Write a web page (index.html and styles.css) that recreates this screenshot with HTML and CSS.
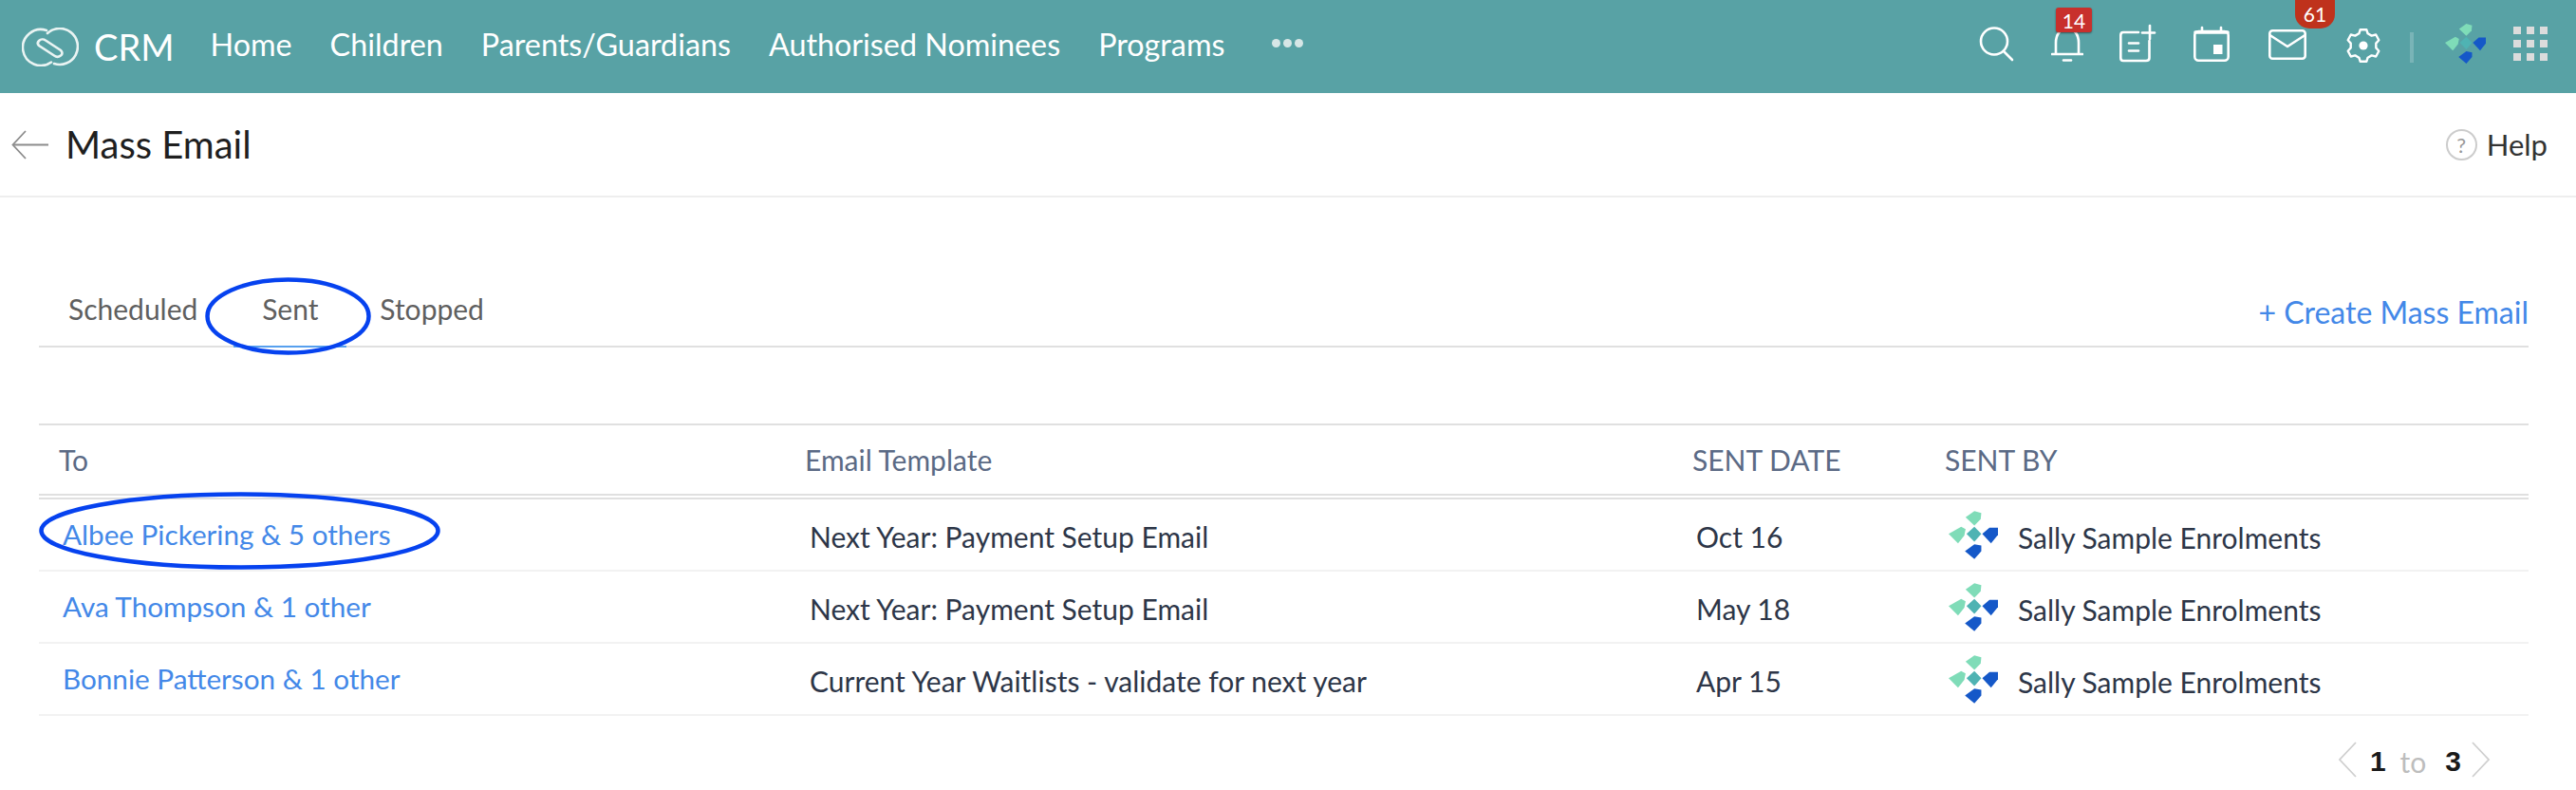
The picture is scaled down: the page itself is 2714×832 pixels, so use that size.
FILE: index.html
```html
<!DOCTYPE html>
<html lang="en">
<head>
<meta charset="utf-8">
<title>Mass Email</title>
<link rel="stylesheet" href="styles.css">
</head>
<body>
<svg class="defs" width="0" height="0" aria-hidden="true">
  <symbol id="logo" viewBox="0 0 157 153">
    <polygon fill="#7fdcb8" points="54,20 82,0 104,6 102,26 82,46"/>
    <polygon fill="#7fdcb8" points="0,73 40,50 54,58 50,78 30,103"/>
    <polygon fill="#4fb3b3" points="57,73 82,50 104,73 82,98"/>
    <polygon fill="#1558c8" points="107,73 130,53 157,53 157,76 135,103"/>
    <polygon fill="#1558c8" points="52,128 82,106 104,110 104,128 82,153"/>
  </symbol>
</svg>
<header class="topbar">
  <div class="brand">
    <svg class="brand-mark" width="60" height="41" viewBox="0 0 60 41" fill="none" stroke="#eaf4f3" stroke-width="2.600" stroke-linecap="round">
      <path d="M26 3 A19 19 0 1 0 31 36.500"/>
      <path d="M34 38 A19 19 0 1 0 27 6"/>
      <path d="M18 14 C20 12 23 12 25 13.500 L41 24 C43 26 43 28 41 29.500 C39 31 36 31 34 29.500 L18 19 C16.500 17.500 16.500 15.500 18 14 Z"/>
    </svg>
    <span class="brand-name">CRM</span>
  </div>
  <nav class="nav">
    <a class="nav-link">Home</a>
    <a class="nav-link">Children</a>
    <a class="nav-link">Parents/Guardians</a>
    <a class="nav-link">Authorised Nominees</a>
    <a class="nav-link">Programs</a>
    <span class="nav-more"><i></i><i></i><i></i></span>
  </nav>
  <div class="tools">
    <svg class="tool tool-search" width="35" height="36" viewBox="0 0 35 36" fill="none" stroke="#fff" stroke-width="2.600">
      <circle cx="15" cy="15.500" r="14"/><path d="M25 26 L34 35" stroke-linecap="round"/>
    </svg>
    <span class="tool tool-bell">
      <svg width="34" height="37" viewBox="0 0 34 37" fill="none" stroke="#fff" stroke-width="2.600" stroke-linecap="round">
        <path d="M5 28 V17 C5 8 10 2 17 2 C24 2 29 8 29 17 V28"/>
        <path d="M1 29 H33"/><path d="M13 35.500 H21"/>
      </svg>
      <b class="badge badge-square">14</b>
    </span>
    <svg class="tool tool-note" width="38" height="39" viewBox="0 0 38 39" fill="none" stroke="#fff" stroke-width="2.600" stroke-linecap="round">
      <path d="M20 8 H4 C2 8 1.300 9 1.300 11 V35 C1.300 37 2 38 4 38 H28 C30 38 31.500 37 31.500 35 V17"/>
      <path d="M10 19.500 H20"/><path d="M10 27.500 H20"/><path d="M32 1 V15"/><path d="M24 8.500 H37"/>
    </svg>
    <svg class="tool tool-cal" width="38" height="37" viewBox="0 0 38 37" fill="none" stroke="#fff" stroke-width="2.600" stroke-linecap="round">
      <rect x="1.300" y="5" width="35.400" height="30.700" rx="4"/><path d="M2 6 H36" stroke-width="3.600"/>
      <path d="M9 1 V5"/><path d="M29 1 V5"/>
      <rect x="21" y="19" width="9.500" height="10" fill="#fff" stroke="none"/>
    </svg>
    <span class="tool tool-mail">
      <svg width="40" height="32" viewBox="0 0 40 32" fill="none" stroke="#fff" stroke-width="2.600" stroke-linejoin="round">
        <rect x="1.300" y="1.300" width="37.400" height="29.400" rx="3"/><path d="M1.500 6 L20 18 L38.500 6"/>
      </svg>
      <b class="badge badge-round">61</b>
    </span>
    <svg class="tool tool-gear" width="36" height="36" viewBox="0 0 36 36" fill="none" stroke="#fff" stroke-width="2.400" stroke-linejoin="round">
      <path d="M13.380 5.310 L14.660 1.300 H21.340 L22.620 5.310 L26.680 7.660 L31.200 6.520 L34.300 12.300 L31.300 15.660 V20.340 L34.300 23.700 L31.200 29.480 L26.680 28.340 L22.620 30.690 L21.340 34.700 H14.660 L13.380 30.690 L9.320 28.340 L4.800 29.480 L1.700 23.700 L4.700 20.340 V15.660 L1.700 12.300 L4.800 6.520 L9.320 7.660 Z"/>
      <circle cx="18" cy="18" r="4.600" fill="#fff" stroke="none"/>
    </svg>
    <span class="tool-sep"></span>
    <svg class="tool tool-avatar" width="43" height="42"><use href="#logo"/></svg>
    <span class="apps">
      <i></i><i></i><i></i><i></i><i></i><i></i><i></i><i></i><i></i>
    </span>
  </div>
</header>

<div class="pagehead">
  <svg class="back" width="39" height="31" viewBox="0 0 39 31" fill="none" stroke="#8c8c8c" stroke-width="1.800">
    <path d="M15 1 L1.500 15.500 L15 30"/><path d="M2 15.500 H39"/>
  </svg>
  <h1 class="title">Mass Email</h1>
  <div class="help">
    <span class="help-icon">?</span>
    <span>Help</span>
  </div>
</div>

<main class="content">
  <div class="tabs">
    <a class="tab tab-first">Scheduled</a>
    <a class="tab tab-active">Sent</a>
    <a class="tab tab-last">Stopped</a>
    <a class="create">+ Create Mass Email</a>
  </div>

  <table class="list">
    <thead>
      <tr>
        <th class="col-to">To</th>
        <th class="col-template">Email Template</th>
        <th class="col-date">SENT DATE</th>
        <th class="col-by">SENT BY</th>
      </tr>
    </thead>
    <tbody>
      <tr>
        <td><a class="rowlink">Albee Pickering &amp; 5 others</a></td>
        <td>Next Year: Payment Setup Email</td>
        <td>Oct 16</td>
        <td><span class="owner"><svg width="52" height="51"><use href="#logo"/></svg><span class="owner-name">Sally Sample Enrolments</span></span></td>
      </tr>
      <tr>
        <td><a class="rowlink">Ava Thompson &amp; 1 other</a></td>
        <td>Next Year: Payment Setup Email</td>
        <td>May 18</td>
        <td><span class="owner"><svg width="52" height="51"><use href="#logo"/></svg><span class="owner-name">Sally Sample Enrolments</span></span></td>
      </tr>
      <tr>
        <td><a class="rowlink">Bonnie Patterson &amp; 1 other</a></td>
        <td>Current Year Waitlists - validate for next year</td>
        <td>Apr 15</td>
        <td><span class="owner"><svg width="52" height="51"><use href="#logo"/></svg><span class="owner-name">Sally Sample Enrolments</span></span></td>
      </tr>
    </tbody>
  </table>

  <div class="pager">
    <svg width="20" height="38" viewBox="0 0 20 38" fill="none" stroke="#cfcfcf" stroke-width="1.800"><path d="M19 1 L2 19 L19 37"/></svg>
    <b class="pager-num pager-from">1</b>
    <span class="pager-to">to</span>
    <b class="pager-num pager-end">3</b>
    <svg width="20" height="38" viewBox="0 0 20 38" fill="none" stroke="#cfcfcf" stroke-width="1.800"><path d="M1 1 L18 19 L1 37"/></svg>
  </div>
</main>

<svg class="mark mark-sent" width="175" height="82" viewBox="0 0 175 82" fill="none"><ellipse cx="87.500" cy="41" rx="85" ry="38.500" stroke="#0642ef" stroke-width="4.500"/></svg>
<svg class="mark mark-row" width="423" height="82" viewBox="0 0 423 82" fill="none"><ellipse cx="211.500" cy="41" rx="209" ry="38.500" stroke="#0642ef" stroke-width="4.500"/></svg>
</body>
</html>
```
FILE: styles.css
```css
* { box-sizing: border-box; }
html, body { margin: 0; padding: 0; }
body {
  position: relative;
  width: 2714px;
  height: 832px;
  overflow: hidden;
  background: #fff;
  font-family: Lato, "Liberation Sans", sans-serif;
  color: #2d3648;
}
.defs { position: absolute; }

.topbar {
  display: flex;
  align-items: flex-start;
  height: 98px;
  background: #58a2a5;
  color: #fff;
}
.brand { display: flex; align-items: center; margin: 27px 0 0 23px; }
.brand-mark { display: block; }
.brand-name { margin-left: 16px; font-size: 38px; line-height: 44px; }
.nav { display: flex; align-items: center; margin: 26px 0 0 38px; gap: 40px; }
.nav-link { font-size: 32.300px; line-height: 42px; color: #fff; }
.nav-more { display: flex; gap: 3px; margin-left: 10px; margin-top: -4px; }
.nav-more i { width: 9px; height: 9px; border-radius: 50%; background: #d6e6e6; }

.tools { display: flex; align-items: flex-start; margin-left: auto; padding-right: 30px; }
.tool { display: block; flex: none; overflow: visible; }
.tool-search { margin-top: 28px; margin-right: 40px; }
.tool-bell { position: relative; width: 34px; height: 37px; margin-top: 28px; margin-right: 38px; }
.tool-bell svg { display: block; }
.tool-note { margin-top: 26px; margin-right: 40px; }
.tool-cal { margin-top: 28px; margin-right: 41px; }
.tool-mail { position: relative; width: 40px; height: 32px; margin-top: 31px; margin-right: 42px; }
.tool-mail svg { display: block; }
.tool-gear { margin-top: 30px; margin-right: 31px; }
.tool-sep { width: 4px; height: 32px; margin-top: 34px; margin-right: 33px; background: rgba(255,255,255,.2); }
.tool-avatar { margin-top: 25px; margin-right: 29px; }
.badge {
  position: absolute;
  color: #fff;
  font-weight: 400;
  font-size: 21px;
  text-align: center;
}
.badge-square {
  left: 5px; top: -20px; width: 38px; height: 26px; line-height: 27px;
  background: #c8302c; border-radius: 3px; box-shadow: 0 1px 2px rgba(0,0,0,.45);
}
.badge-round {
  left: 28px; top: -31px; width: 42px; height: 30px; line-height: 30px;
  background: #bf321c; border-radius: 0 0 15px 15px / 0 0 15px 15px;
}
.apps {
  display: grid;
  grid-template-columns: repeat(3, 8px);
  grid-auto-rows: 8px;
  gap: 6px;
  margin-top: 28px;
}
.apps i { background: #dcdcdc; }

.pagehead {
  display: flex;
  align-items: center;
  height: 110px;
  padding: 0 30px 0 12px;
  border-bottom: 2px solid #eee;
}
.back { display: block; }
.title { margin: 0 0 0 18px; font-size: 40px; font-weight: 400; color: #1f1f1f; }
.help { display: flex; align-items: center; gap: 10px; margin-left: auto; font-size: 31px; color: #333; }
.help-icon {
  width: 33px; height: 33px; border: 2px solid #ccc; border-radius: 50%;
  color: #999; font-size: 22px; line-height: 29px; text-align: center;
}

.content { padding: 0 50px 0 41px; }
.tabs {
  display: flex;
  align-items: flex-end;
  height: 158px;
  border-bottom: 2px solid #e0e0e0;
}
.tab {
  height: 57px;
  font-size: 30px;
  line-height: 36px;
  color: #5f5f5f;
}
.tab-first { padding: 0 38px 0 31px; }
.tab-active { width: 119px; text-align: center; box-shadow: 0 2px 0 #57a0ee; }
.tab-last { padding-left: 35px; }
.create { margin-left: auto; margin-bottom: 16px; font-size: 32px; color: #4388e8; }

.list {
  width: 100%;
  margin-top: 80px;
  border-collapse: separate;
  border-spacing: 0;
  table-layout: fixed;
  font-size: 30px;
}
.list th {
  height: 80px;
  padding: 0;
  border-top: 2px solid #e0e0e0;
  border-bottom: 6px double #e0e0e0;
  font-weight: 400;
  text-align: left;
  color: #5b6a85;
}
.list .col-to { width: 807px; padding-left: 21px; }
.col-template { width: 935px; }
.col-date { width: 266px; }
.list td { height: 76px; padding: 0; border-bottom: 2px solid #f2f2f2; }
.list td:nth-child(1) { padding: 0 0 3px 25px; }
.list td:nth-child(2) { padding: 3px 0 0 5px; }
.list td:nth-child(3) { padding: 3px 0 0 4px; }
.list td:nth-child(4) { padding-left: 4px; }
.rowlink { color: #4388e8; font-size: 29.700px; }
.owner { display: flex; align-items: center; gap: 21px; }
.owner svg { display: block; }
.owner-name { padding-top: 6px; }

.pager {
  display: flex;
  align-items: center;
  justify-content: flex-end;
  margin-top: 26px;
  padding-right: 40px;
  font-size: 30px;
  color: #bdbdbd;
}
.pager-num { padding-top: 4px; font-family: "Liberation Sans", sans-serif; color: #1a1a1a; }
.pager-to { padding-top: 4px; margin: 0 20px 0 15px; }
.pager-from { margin-left: 14px; }
.pager-end { margin-right: 11px; }

.mark { position: absolute; display: block; }
.mark-sent { left: 216px; top: 292px; }
.mark-row { left: 41px; top: 518px; }
```
